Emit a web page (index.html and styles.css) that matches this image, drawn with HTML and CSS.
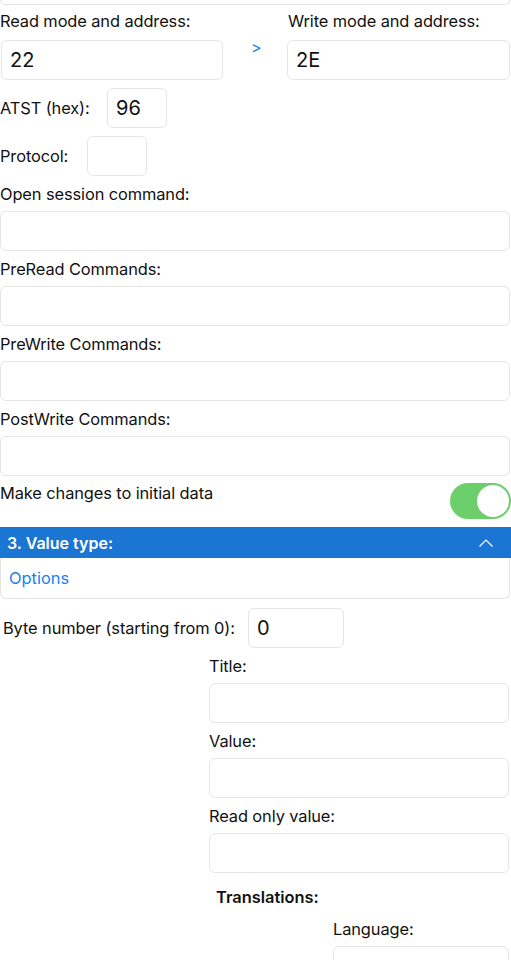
FILE: index.html
```html
<!DOCTYPE html>
<html>
<head>
<meta charset="utf-8">
<link rel="stylesheet" href="styles.css">
</head>
<body>
<div class="page">
  <div class="topbox"></div>

  <div class="pair">
    <div class="col">
      <div class="label">Read mode and address:</div>
      <div class="field">22</div>
    </div>
    <div class="arrow">&gt;</div>
    <div class="col">
      <div class="label">Write mode and address:</div>
      <div class="field">2E</div>
    </div>
  </div>

  <div class="inline atst">
    <span class="label">ATST (hex):</span>
    <div class="field small">96</div>
  </div>
  <div class="inline proto">
    <span class="label">Protocol:</span>
    <div class="field small"></div>
  </div>

  <div class="label block">Open session command:</div>
  <div class="field wide"></div>
  <div class="label block">PreRead Commands:</div>
  <div class="field wide"></div>
  <div class="label block">PreWrite Commands:</div>
  <div class="field wide"></div>
  <div class="label block">PostWrite Commands:</div>
  <div class="field wide"></div>

  <div class="switchrow">
    <span class="label">Make changes to initial data</span>
    <div class="toggle"><div class="knob"></div></div>
  </div>

  <div class="header">
    <span>3. Value type:</span>
    <svg class="chev" width="16" height="10" viewBox="0 0 16 10"><path d="M1.5 8.5 L8 2 L14.5 8.5" fill="none" stroke="#fff" stroke-width="1.2"/></svg>
  </div>
  <div class="options">Options</div>

  <div class="inline byte">
    <span class="label">Byte number (starting from 0):</span>
    <div class="field bytef">0</div>
  </div>

  <div class="sub">
    <div class="label block">Title:</div>
    <div class="field wide"></div>
    <div class="label block">Value:</div>
    <div class="field wide"></div>
    <div class="label block">Read only value:</div>
    <div class="field wide"></div>
  </div>

  <div class="trans">Translations:</div>
  <div class="lang">
    <div class="label block">Language:</div>
    <div class="field wide"></div>
  </div>
</div>
</body>
</html>
```

FILE: styles.css
```css
html, body {
  margin: 0;
  padding: 0;
  background: #fff;
}
body {
  font-family: Inter, "Noto Sans", sans-serif;
  color: #111;
  width: 511px;
  overflow: hidden;
}
.page {
  display: flex;
  flex-direction: column;
}
.topbox {
  height: 4px;
  border: 1px solid #e4e4e4;
  border-top: none;
  border-radius: 0 0 6px 6px;
  margin-right: 1px;
}
.label {
  font-size: 16.4px;
  line-height: 20px;
  letter-spacing: -0.1px;
}
.block {
  margin-top: 8px;
  margin-bottom: 7px;
}
.field {
  box-sizing: border-box;
  height: 40px;
  border: 1px solid #e6e6e6;
  border-radius: 6px;
  font-size: 20px;
  padding-left: 8px;
  display: flex;
  align-items: center;
  background: #fff;
}
.wide {
  margin-right: 1px;
}
.pair {
  display: grid;
  grid-template-columns: 223px 64px 223px;
  margin-top: 6px;
}
.pair .col {
  display: flex;
  flex-direction: column;
}
.pair .col:first-child {
  padding-left: 1px;
}
.pair .col:first-child .label {
  margin-left: -1px;
}
.pair .label {
  margin-bottom: 9px;
}
.arrow {
  color: #1a7ff0;
  font-size: 16px;
  line-height: 20px;
  padding-left: 28px;
  padding-top: 26px;
}
.pair .col:last-child .label {
  margin-left: 1px;
}
.inline {
  display: flex;
  align-items: center;
}
.atst {
  margin-top: 8px;
}
.atst .label {
  width: 107px;
}
.proto {
  margin-top: 8px;
}
.proto .label {
  width: 87px;
}
.small {
  width: 60px;
}
.switchrow {
  display: flex;
  justify-content: space-between;
  align-items: flex-start;
  margin-top: 7px;
}
.toggle {
  width: 61px;
  height: 36px;
  border-radius: 18px;
  background: #6ccf6c;
  position: relative;
}
.knob {
  position: absolute;
  right: 2px;
  top: 2px;
  width: 32px;
  height: 32px;
  border-radius: 50%;
  background: #fff;
}
.header {
  margin-top: 8px;
  height: 31px;
  background: #1b76d3;
  color: #fff;
  font-weight: 600;
  font-size: 16px;
  display: flex;
  align-items: center;
  justify-content: space-between;
  padding: 0 17px 0 7px;
}
.options {
  box-sizing: border-box;
  height: 41px;
  border: 1px solid #e4e4e4;
  border-top: none;
  border-radius: 0 0 6px 6px;
  color: #1a7ff0;
  font-size: 16.4px;
  display: flex;
  align-items: center;
  padding-left: 8px;
  margin-right: 1px;
}
.byte {
  margin-top: 9px;
}
.byte .label {
  width: 245px;
  padding-left: 3px;
}
.bytef {
  width: 96px;
}
.sub {
  margin-left: 209px;
  margin-right: 1px;
  display: flex;
  flex-direction: column;
}
.trans {
  margin-top: 14px;
  margin-left: 216px;
  font-weight: 600;
  font-size: 16.4px;
  line-height: 20px;
}
.lang {
  margin-left: 333px;
  margin-right: 1px;
  margin-top: 4px;
  display: flex;
  flex-direction: column;
}
```
